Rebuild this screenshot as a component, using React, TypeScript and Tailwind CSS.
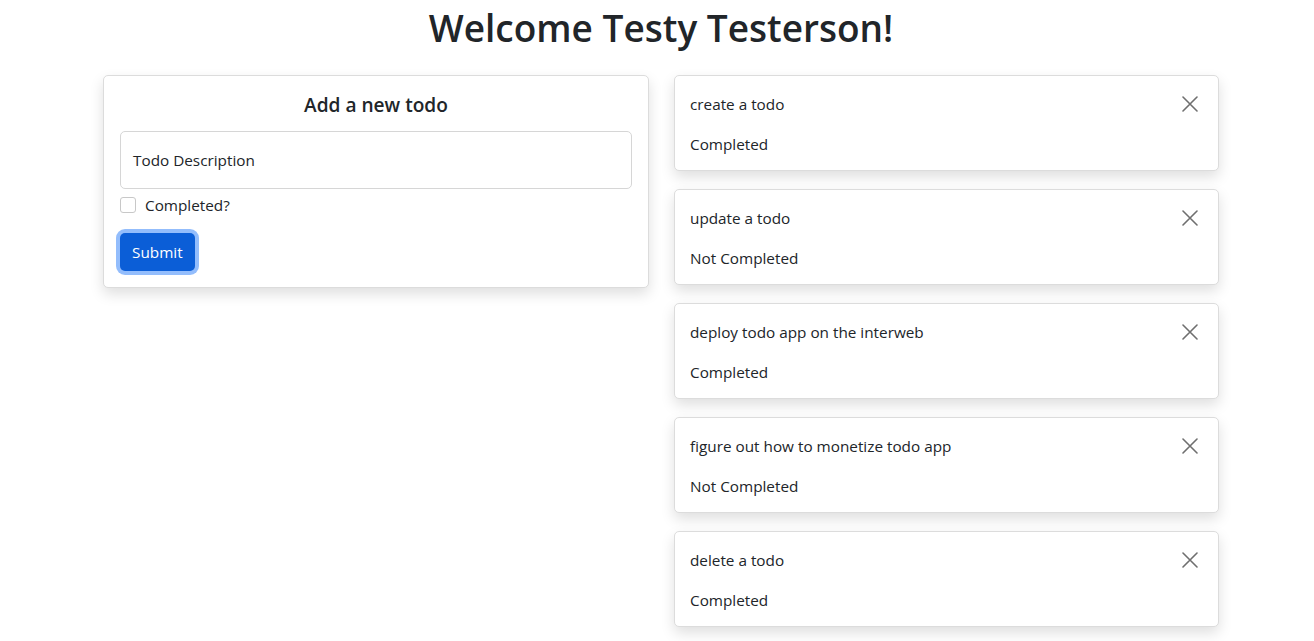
import React from 'react';

const todos = [
  { description: 'create a todo', completed: true },
  { description: 'update a todo', completed: false },
  { description: 'deploy todo app on the interweb', completed: true },
  { description: 'figure out how to monetize todo app', completed: false },
  { description: 'delete a todo', completed: true },
];

const CloseIcon = () => (
  <svg width="16" height="16" viewBox="0 0 16 16" className="block">
    <path d="M1 1 L15 15 M15 1 L1 15" stroke="#6f6f6f" strokeWidth="1.6" strokeLinecap="round" />
  </svg>
);

const TodoCard = ({ description, completed }: { description: string; completed: boolean }) => {
  return (
    <div className="bg-white border border-[#dcdcdc] rounded-[5px] shadow-[0_6px_14px_rgba(0,0,0,0.13)] pl-[15px] pr-4 pt-4 pb-[14px]">
      <div className="flex items-center justify-between">
        <p className="leading-6">{description}</p>
        <button className="w-[16px] h-[24px] flex items-center justify-center mr-[4px]">
          <CloseIcon />
        </button>
      </div>
      <p className="leading-6 mt-4">{completed ? 'Completed' : 'Not Completed'}</p>
    </div>
  );
};

const App = () => {
  return (
    <div className="min-h-screen bg-white text-[#212529] text-[15.3px] font-['Segoe_UI','Open_Sans',sans-serif]">
      <div className="w-[1116px] ml-[103px]">
        <h1 className="text-center text-[37px] font-semibold leading-[1.2] pt-[6px] mb-[25px]">
          Welcome Testy Testerson!
        </h1>
        <div className="grid grid-cols-[546px_545px] gap-[25px] items-start">
          <div className="bg-white border border-[#dcdcdc] rounded-[5px] shadow-[0_6px_14px_rgba(0,0,0,0.13)] px-4 pt-[16px] pb-[16px]">
            <h5 className="text-center text-[19.1px] font-semibold leading-[1.2] mb-[14px] mt-[2px]">Add a new todo</h5>
            <div className="border border-[#d6d6d6] rounded-[5px] h-[58px] flex items-center px-3">
              <span className="text-[#212529]">Todo Description</span>
            </div>
            <label className="flex items-center gap-[9px] mt-[4px] leading-6">
              <span className="w-[16px] h-[16px] border border-[#c8c8c8] rounded-[3px] bg-white" />
              <span>Completed?</span>
            </label>
            <div className="mt-[16px]">
              <button className="bg-[#0b5ed7] text-white rounded-[5px] px-3 h-[38px] ring-4 ring-[#93bdfc] leading-6">
                Submit
              </button>
            </div>
          </div>
          <div className="flex flex-col gap-[18px]">
            {todos.map((todo, index) => (
              <TodoCard key={`todo-${index}`} description={todo.description} completed={todo.completed} />
            ))}
          </div>
        </div>
      </div>
    </div>
  );
};

export default App;
